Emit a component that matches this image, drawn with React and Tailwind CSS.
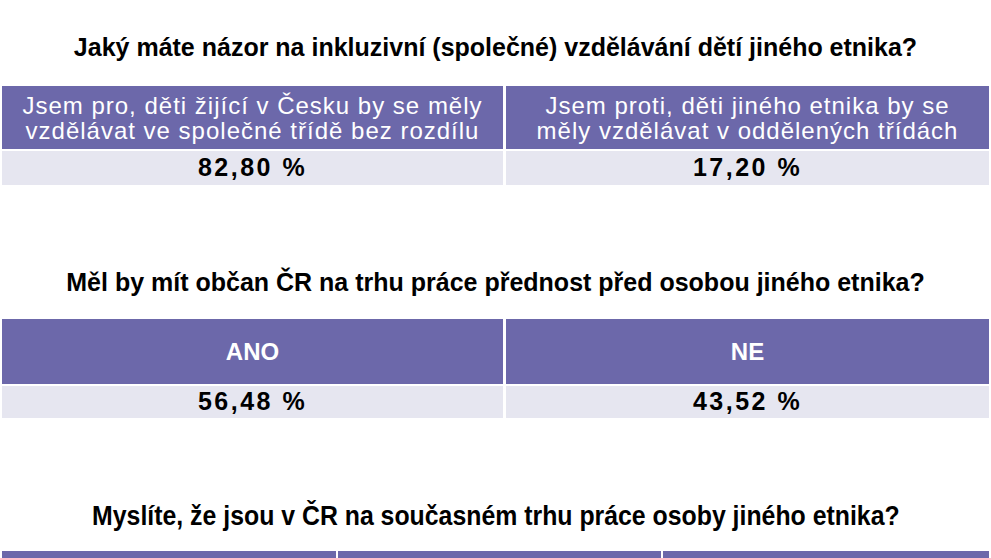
function Title({ children, className, textClass }) {
    return (
        <div className={"flex items-end justify-center text-black font-bold " + className}>
            <span className={textClass}>{children}</span>
        </div>
    )
}

export default function App() {
    return (
        <div className="w-[991px] h-[558px] overflow-hidden bg-white font-['Liberation_Sans',Arial,sans-serif]">
            <Title className="h-[86px] pb-[26px]" textClass="text-[25px] leading-[26px]">
                Jaký máte názor na inkluzivní (společné) vzdělávání dětí jiného etnika?
            </Title>
            <div className="flex gap-[3px] pl-[2px] pr-[2px]">
                <div className="w-[501px] flex flex-col gap-[2px]">
                    <div className="h-[63px] bg-[#6c68aa] text-white text-[24px] leading-[25px] tracking-[1px] flex items-center justify-center text-center">
                        Jsem pro, děti žijící v Česku by se měly<br />vzdělávat ve společné třídě bez rozdílu
                    </div>
                    <div className="h-[34px] bg-[#e6e6f0] text-black font-bold text-[25px] tracking-[2.5px] flex items-center justify-center">
                        82,80 %
                    </div>
                </div>
                <div className="flex-1 flex flex-col gap-[2px]">
                    <div className="h-[63px] bg-[#6c68aa] text-white text-[24px] leading-[25px] tracking-[1px] flex items-center justify-center text-center">
                        Jsem proti, děti jiného etnika by se<br />měly vzdělávat v oddělených třídách
                    </div>
                    <div className="h-[34px] bg-[#e6e6f0] text-black font-bold text-[25px] tracking-[2.5px] flex items-center justify-center">
                        17,20 %
                    </div>
                </div>
            </div>
            <Title className="h-[134px] pb-[24px]" textClass="text-[25px] leading-[26px]">
                Měl by mít občan ČR na trhu práce přednost před osobou jiného etnika?
            </Title>
            <div className="flex gap-[3px] pl-[2px] pr-[2px]">
                <div className="w-[501px] flex flex-col gap-[2px]">
                    <div className="h-[65px] bg-[#6c68aa] text-white font-bold text-[24px] flex items-center justify-center">
                        ANO
                    </div>
                    <div className="h-[32px] bg-[#e6e6f0] text-black font-bold text-[25px] tracking-[2.5px] flex items-center justify-center">
                        56,48 %
                    </div>
                </div>
                <div className="flex-1 flex flex-col gap-[2px]">
                    <div className="h-[65px] bg-[#6c68aa] text-white font-bold text-[24px] flex items-center justify-center">
                        NE
                    </div>
                    <div className="h-[32px] bg-[#e6e6f0] text-black font-bold text-[25px] tracking-[2.5px] flex items-center justify-center">
                        43,52 %
                    </div>
                </div>
            </div>
            <Title className="h-[133px] pb-[21px]" textClass="text-[27px] leading-[28px] scale-x-[0.92] whitespace-nowrap">
                Myslíte, že jsou v ČR na současném trhu práce osoby jiného etnika?
            </Title>
            <div className="flex gap-[2px] pl-[2px] pr-[2px]">
                <div className="w-[334px] h-[40px] bg-[#6c68aa]"></div>
                <div className="w-[323px] h-[40px] bg-[#6c68aa]"></div>
                <div className="flex-1 h-[40px] bg-[#6c68aa]"></div>
            </div>
        </div>
    )
}
